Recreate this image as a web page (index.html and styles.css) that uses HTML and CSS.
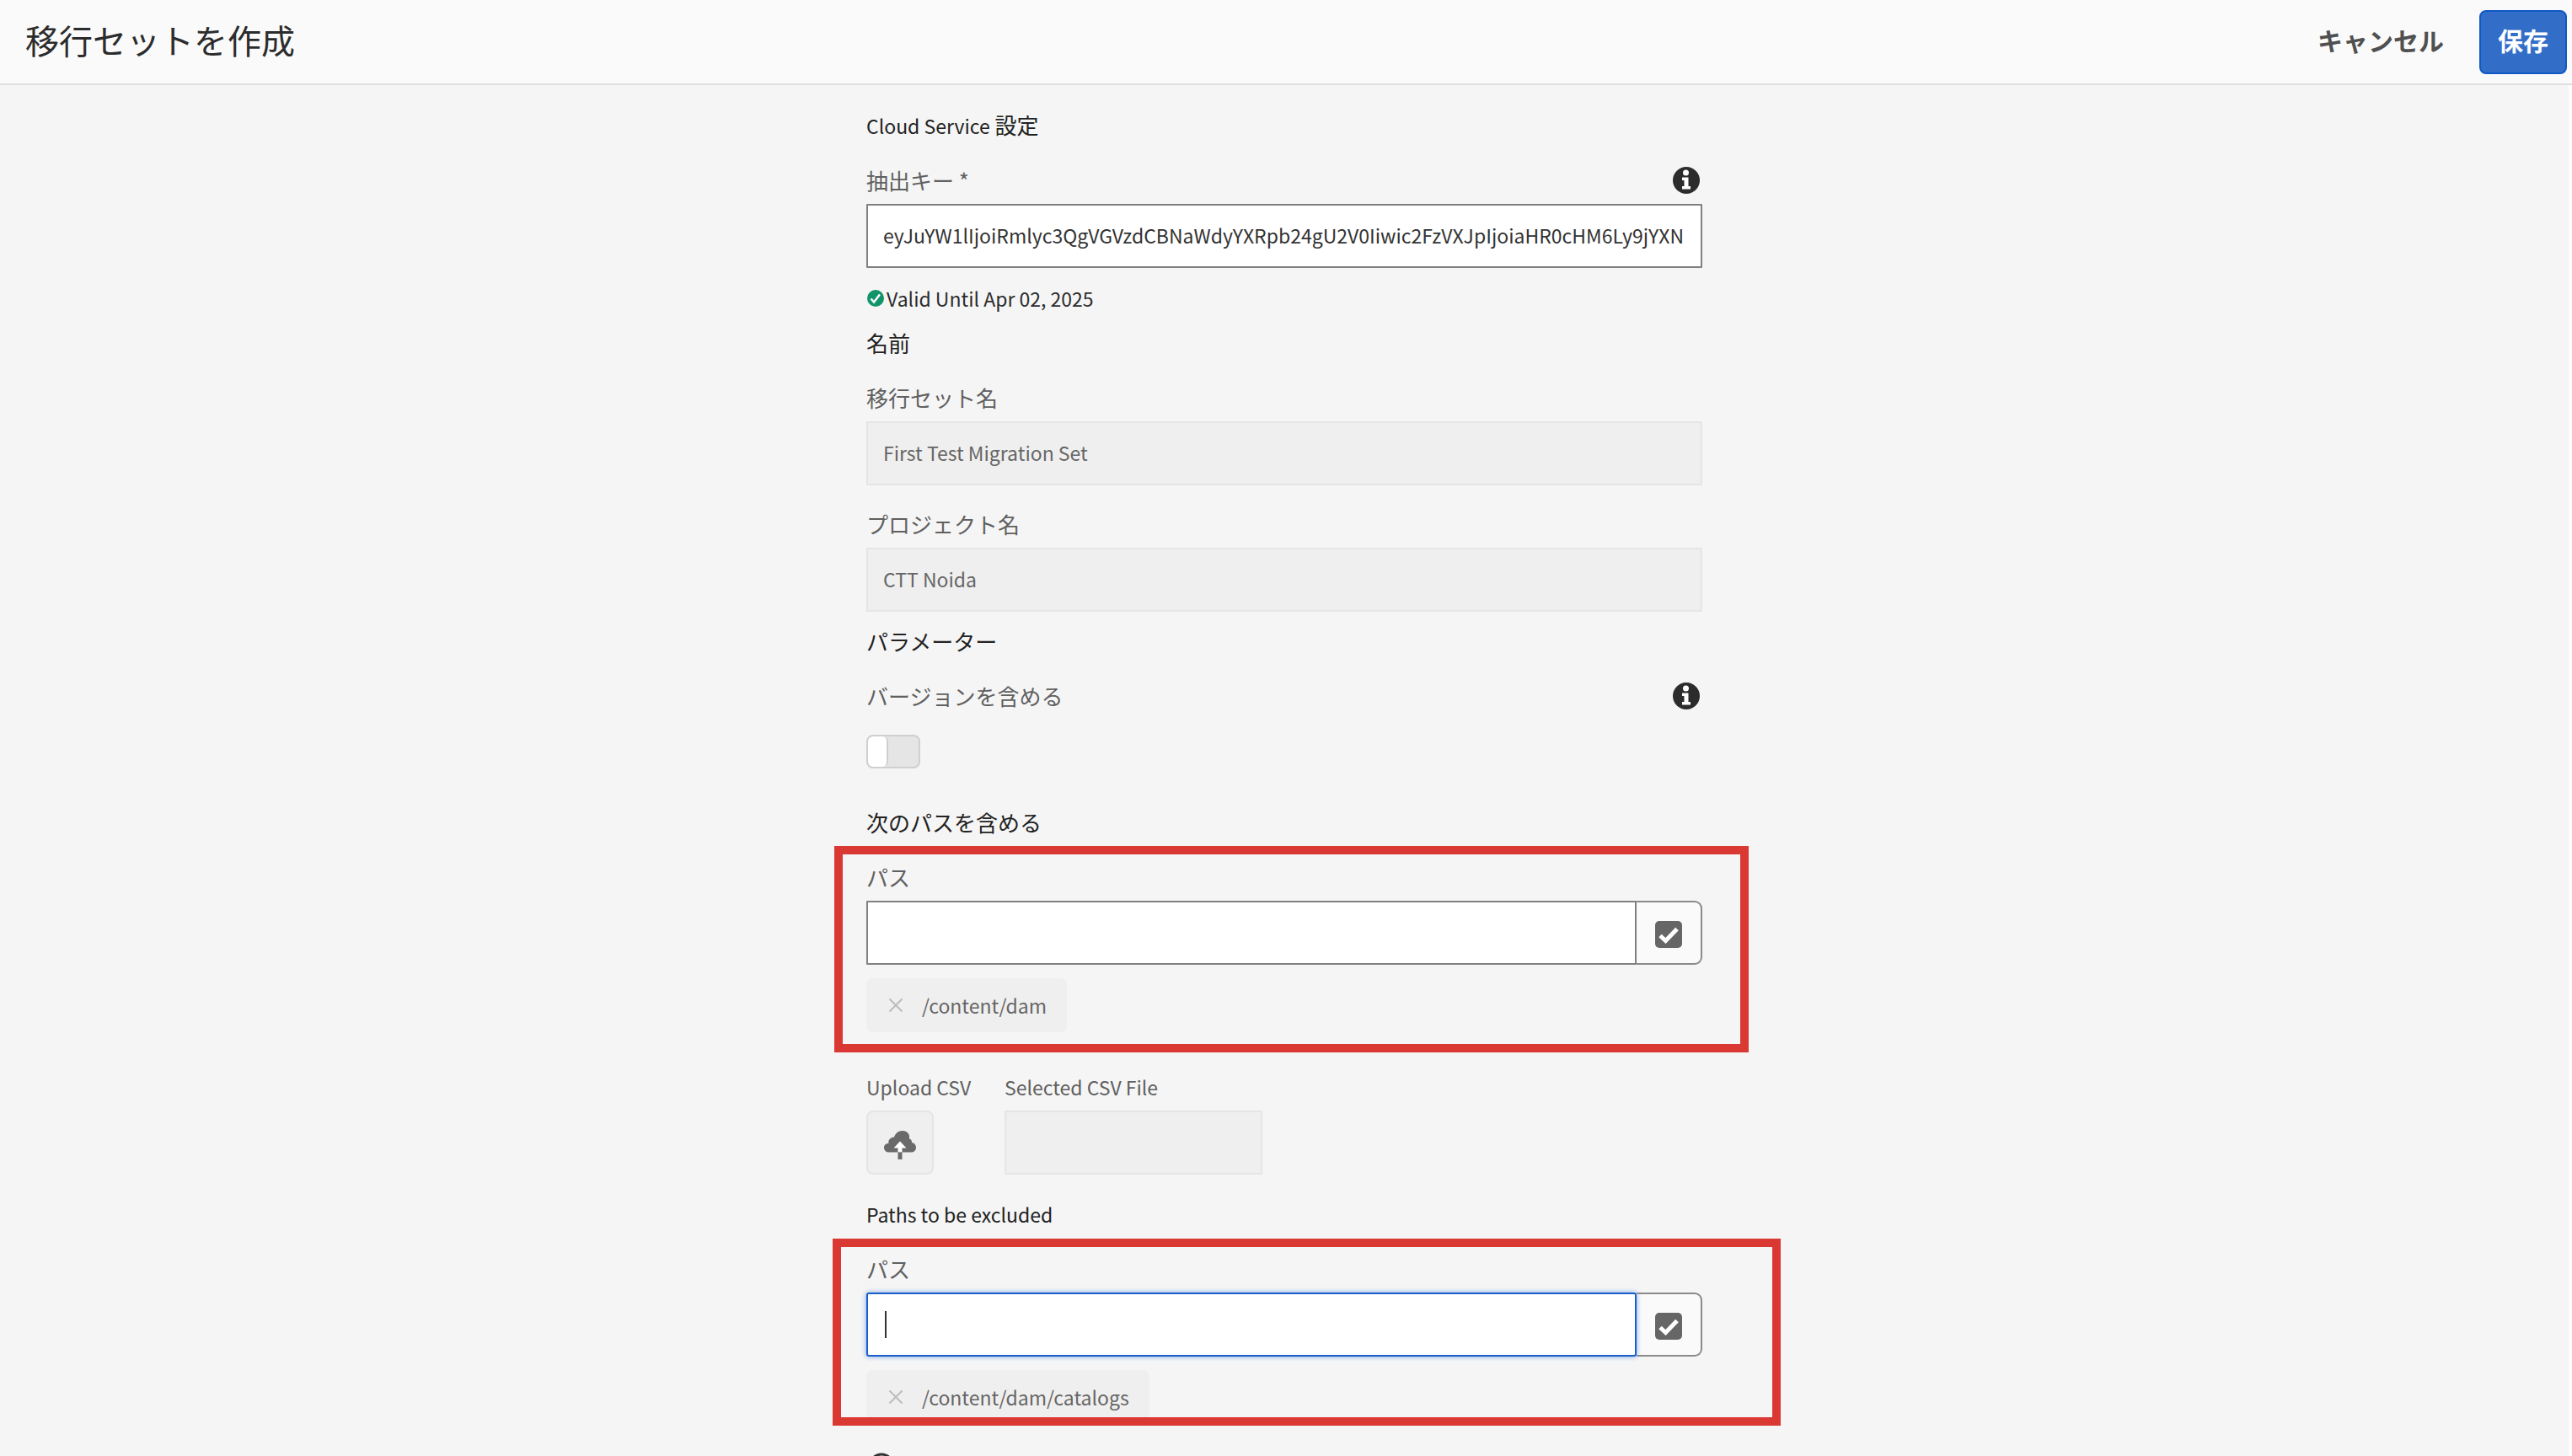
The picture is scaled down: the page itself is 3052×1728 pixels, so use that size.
FILE: index.html
```html
<!DOCTYPE html>
<html lang="ja">
<head>
<meta charset="utf-8">
<title>移行セットを作成</title>
<link rel="stylesheet" href="styles.css">
</head>
<body>
<header class="topbar">
  <h1 class="topbar-title">移行セットを作成</h1>
  <div class="topbar-actions">
    <button type="button" class="btn-quiet">キャンセル</button>
    <button type="submit" form="migration-form" class="btn-primary">保存</button>
  </div>
</header>
<main class="content">
  <form id="migration-form" class="form">
    <section class="section">
      <h2 class="heading"><span class="latin">Cloud Service</span> 設定</h2>
      <div class="label-row">
        <label class="label" for="key">抽出キー *</label>
        <svg class="info" viewBox="0 0 32 32" aria-hidden="true"><circle cx="16" cy="16" r="16" fill="#2c2c2c"/><circle cx="15.500" cy="7" r="3.500" fill="#fff"/><path d="M11 12.500h7.500v10.500h2.500v3.500H11V23h2.500v-7H11z" fill="#fff"/></svg>
      </div>
      <input class="field" id="key" type="text" value="eyJuYW1lIjoiRmlyc3QgVGVzdCBNaWdyYXRpb24gU2V0Iiwic2FzVXJpIjoiaHR0cHM6Ly9jYXN">
      <p class="status latin">
        <svg class="status-icon" viewBox="0 0 20 20" aria-hidden="true"><circle cx="10" cy="10" r="10" fill="#12946a"/><path d="M4.500 10.500l3.500 4 7-9" fill="none" stroke="#fff" stroke-width="2.500"/></svg>
        <span>Valid Until Apr 02, 2025</span>
      </p>
    </section>

    <section class="section section-name">
      <h2 class="heading">名前</h2>
      <label class="label" for="set-name">移行セット名</label>
      <input class="field" id="set-name" type="text" value="First Test Migration Set" disabled>
      <label class="label label-next" for="project-name">プロジェクト名</label>
      <input class="field" id="project-name" type="text" value="CTT Noida" disabled>
    </section>

    <section class="section section-params">
      <h2 class="heading">パラメーター</h2>
      <div class="label-row">
        <label class="label" for="versions">バージョンを含める</label>
        <svg class="info" viewBox="0 0 32 32" aria-hidden="true"><circle cx="16" cy="16" r="16" fill="#2c2c2c"/><circle cx="15.500" cy="7" r="3.500" fill="#fff"/><path d="M11 12.500h7.500v10.500h2.500v3.500H11V23h2.500v-7H11z" fill="#fff"/></svg>
      </div>
      <input class="switch" id="versions" type="checkbox" role="switch">
    </section>

    <section class="section section-include">
      <h2 class="heading">次のパスを含める</h2>
      <div class="paths paths-include">
        <label class="label" for="include-path">パス</label>
        <div class="picker">
          <input class="field" id="include-path" type="text">
          <button type="button" class="picker-button" aria-label="選択">
            <svg class="check-icon" viewBox="0 0 34 34" aria-hidden="true"><rect x="1" y="1" width="32" height="32" rx="5" fill="#666"/><path d="M7 18.500l6.500 6L27 10.500" fill="none" stroke="#fff" stroke-width="5"/></svg>
          </button>
        </div>
        <div class="tag latin">
          <button type="button" class="tag-remove" aria-label="削除"><svg class="cross" viewBox="0 0 18 18" aria-hidden="true"><path d="M1.500 1.500l15 15m0-15l-15 15" stroke="#bcbcbc" stroke-width="2"/></svg></button>
          <span>/content/dam</span>
        </div>
      </div>
      <div class="csv latin">
        <div class="csv-upload">
          <label class="label" for="upload">Upload CSV</label>
          <button type="button" class="upload" id="upload">
            <svg class="cloud" viewBox="0 0 38 34" aria-hidden="true"><path d="M6 25.500C2.500 25.500 0 23.500 0 20s2.500-5 5.500-5C4.500 11 7.500 8 12 7.500 13.500 3 17 0 22 0c5.500 0 9 4 8 9.500 2 .5 3.200 2 3 4.500 3 .5 5 3 5 6 0 3.500-2.500 5.500-6 5.500z" fill="#6a6a6a"/><path d="M19 12.500l7.500 8h-5v5h-5v-5h-5z" fill="#fff"/><path d="M16.500 25.500h5V34h-5z" fill="#6a6a6a"/></svg>
          </button>
        </div>
        <div class="csv-file">
          <label class="label" for="csv-name">Selected CSV File</label>
          <input class="field" id="csv-name" type="text" disabled>
        </div>
      </div>
    </section>

    <section class="section section-exclude">
      <h2 class="heading latin">Paths to be excluded</h2>
      <div class="paths paths-exclude">
        <label class="label" for="exclude-path">パス</label>
        <div class="picker">
          <input class="field field-focus" id="exclude-path" type="text">
          <span class="caret"></span>
          <button type="button" class="picker-button" aria-label="選択">
            <svg class="check-icon" viewBox="0 0 34 34" aria-hidden="true"><rect x="1" y="1" width="32" height="32" rx="5" fill="#666"/><path d="M7 18.500l6.500 6L27 10.500" fill="none" stroke="#fff" stroke-width="5"/></svg>
          </button>
        </div>
        <div class="tag latin">
          <button type="button" class="tag-remove" aria-label="削除"><svg class="cross" viewBox="0 0 18 18" aria-hidden="true"><path d="M1.500 1.500l15 15m0-15l-15 15" stroke="#bcbcbc" stroke-width="2"/></svg></button>
          <span>/content/dam/catalogs</span>
        </div>
      </div>
      <svg class="expand" viewBox="0 0 32 32" aria-hidden="true"><circle cx="16" cy="16" r="14" fill="none" stroke="#333" stroke-width="3"/></svg>
    </section>
  </form>
</main>
</body>
</html>
```
FILE: styles.css
```css
* {
  box-sizing: border-box;
}

body {
  margin: 0;
  height: 100vh;
  display: flex;
  flex-direction: column;
  overflow: hidden;
  background: #f5f5f5;
  color: #2c2c2c;
  font: 26px/32px "Noto Sans CJK JP", sans-serif;
}

button,
input {
  font: inherit;
  margin: 0;
}

.latin,
.heading.latin {
  font-size: 23px;
}

.topbar {
  flex: none;
  display: flex;
  align-items: center;
  justify-content: space-between;
  height: 101px;
  padding: 0 6px 0 30px;
  background: #fafafa;
  border-bottom: 2px solid #e0e0e0;
}

.topbar-title {
  margin: 0;
  padding-bottom: 6px;
  font-size: 40px;
  line-height: 60px;
  font-weight: 400;
}

.topbar-actions {
  display: flex;
  align-items: center;
  gap: 42px;
}

.btn-quiet,
.btn-primary {
  font-size: 30px;
  font-weight: 700;
}

.btn-quiet {
  padding: 0 0 6px;
  border: 0;
  background: none;
  color: #505050;
}

.btn-primary {
  height: 76px;
  padding: 0 20px 6px;
  border: 2px solid #1058c4;
  border-radius: 8px;
  background: #326ec8;
  color: #fff;
}

.content {
  flex: 1;
  min-height: 0;
  overflow: hidden;
  padding: 31px 24px 0;
  border-right: 4px solid #fcfcfc;
}

.form {
  max-width: 992px;
  margin: 0 auto;
}

.heading {
  margin: 0 0 33px;
  font-size: 26px;
  line-height: 32px;
  font-weight: 400;
  color: #222;
}

.label {
  display: block;
  color: #606060;
}

.label-row {
  display: flex;
  justify-content: space-between;
  align-items: center;
  padding-right: 3px;
}

.info {
  width: 32px;
  height: 32px;
}

.field {
  display: block;
  width: 100%;
  height: 76px;
  margin-top: 12px;
  padding: 0 18px 2px;
  border: 2px solid #808080;
  border-radius: 1px;
  outline: none;
  background: #fff;
  color: #333;
  font-size: 23px;
}

.field:disabled {
  border-color: #e5e5e5;
  background: #efefef;
  color: #666;
}

.status {
  display: flex;
  align-items: center;
  gap: 2px;
  margin: 20px 0 0;
}

.status-icon {
  width: 22px;
  height: 20px;
}

.section-name {
  margin-top: 21px;
}

.label-next {
  margin-top: 30px;
}

.section-params {
  margin-top: 19px;
}

.switch {
  display: block;
  appearance: none;
  width: 64px;
  height: 40px;
  margin-top: 30px;
  border: 2px solid #cfcfcf;
  border-radius: 8px;
  background: #e5e5e5;
  overflow: hidden;
}

.switch::before {
  content: "";
  display: block;
  width: 22px;
  height: 36px;
  border-right: 2px solid #cfcfcf;
  border-radius: 6px;
  background: #fff;
}

.section-include {
  margin-top: 48px;
}

.paths {
  position: relative;
}

/* Callout frame drawn over the path controls */
.paths::after {
  content: "";
  position: absolute;
  border: 10px solid #da3832;
  pointer-events: none;
}

.paths-include::after {
  inset: -21px -55px -24px -38px;
}

.paths-exclude::after {
  inset: -20px -93px -2px -40px;
}

.picker {
  position: relative;
  display: flex;
  margin-top: 12px;
}

.picker .field {
  flex: 1;
  width: auto;
  margin: 0;
}

.picker .field-focus {
  position: relative;
  border-color: #1a5fc8;
  border-radius: 3px;
  box-shadow: 0 0 6px #7aa4e4;
  caret-color: transparent;
  z-index: 1;
}

.caret {
  position: absolute;
  z-index: 2;
  left: 22px;
  top: 22px;
  width: 2px;
  height: 32px;
  background: #333;
}

.picker-button {
  display: flex;
  align-items: center;
  justify-content: center;
  width: 78px;
  padding: 0;
  border: 2px solid #8a8a8a;
  border-left: 0;
  border-radius: 0 9px 9px 0;
  background: #fafafa;
}

.check-icon {
  width: 34px;
  height: 34px;
  margin-top: 4px;
}

.tag {
  display: inline-flex;
  align-items: center;
  gap: 20px;
  height: 64px;
  margin-top: 16px;
  padding: 0 24px;
  border-radius: 8px;
  background: #efefef;
  color: #666;
  vertical-align: top;
}

.tag-remove {
  display: flex;
  padding: 0 2px;
  border: 0;
  background: none;
}

.cross {
  width: 18px;
  height: 18px;
}

.csv {
  display: flex;
  gap: 40px;
  margin-top: 49px;
}

.csv-upload {
  width: 124px;
  white-space: nowrap;
}

.csv-file {
  width: 306px;
}

.upload {
  display: flex;
  align-items: center;
  justify-content: center;
  width: 80px;
  height: 76px;
  margin-top: 12px;
  padding: 6px 0 0;
  border: 2px solid #e5e5e5;
  border-radius: 8px;
  background: #efefef;
}

.cloud {
  width: 38px;
  height: 34px;
}

.section-exclude {
  margin-top: 31px;
}

.expand {
  display: block;
  width: 32px;
  height: 32px;
  margin: 34px 0 0 2px;
}
```
